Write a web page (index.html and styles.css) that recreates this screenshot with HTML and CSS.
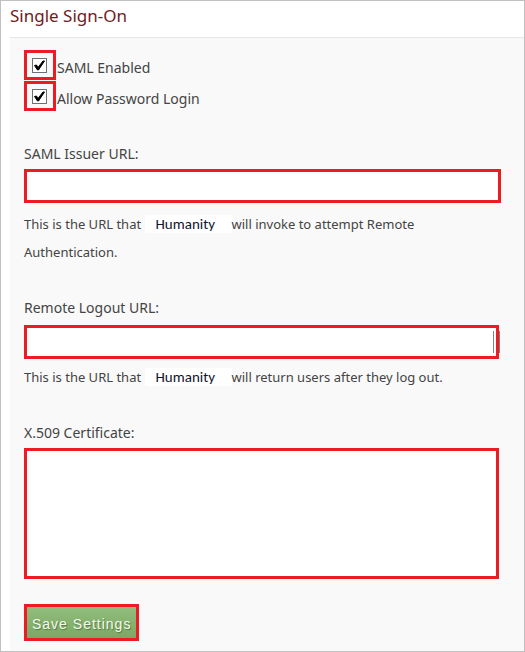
FILE: index.html
```html
<!DOCTYPE html>
<html lang="en">
<head>
<meta charset="utf-8">
<meta name="viewport" content="width=device-width, initial-scale=1">
<title>Single Sign-On</title>
<link rel="stylesheet" href="styles.css">
</head>
<body>
<main class="page">
  <h1 class="title">Single Sign-On</h1>
  <form class="panel">
    <div class="options">
      <div class="option">
        <span class="check">
          <input type="checkbox" id="saml" checked>
          <svg class="tick" viewBox="0 0 15 15" aria-hidden="true"><path d="M2.5 7.5 4.5 7 6 9.5 11 3 12.5 3 6.5 12 5.5 12Z"/></svg>
        </span>
        <label for="saml">SAML Enabled</label>
      </div>
      <div class="option">
        <span class="check">
          <input type="checkbox" id="password" checked>
          <svg class="tick" viewBox="0 0 15 15" aria-hidden="true"><path d="M2.5 7.5 4.5 7 6 9.5 11 3 12.5 3 6.5 12 5.5 12Z"/></svg>
        </span>
        <label for="password">Allow Password Login</label>
      </div>
    </div>
    <div class="field">
      <label for="issuer">SAML Issuer URL:</label>
      <div class="control"><input class="box" type="text" id="issuer"></div>
      <p class="help">This is the URL that <span class="brand">Humanity</span>will invoke to attempt Remote<br>Authentication.</p>
    </div>
    <div class="field field-logout">
      <label for="logout">Remote Logout URL:</label>
      <div class="control control-cursor"><input class="box" type="text" id="logout"></div>
      <p class="help">This is the URL that <span class="brand">Humanity</span>will return users after they log out.</p>
    </div>
    <div class="field field-cert">
      <label for="cert">X.509 Certificate:</label>
      <textarea class="box" id="cert"></textarea>
    </div>
    <button class="save" type="button">Save Settings</button>
  </form>
</main>
</body>
</html>
```
FILE: styles.css
```css
* { box-sizing: border-box; }

body {
  margin: 0;
  background: #fff;
  color: #444;
  font: 14px/28px Tahoma, "Noto Sans", sans-serif;
}

.page {
  display: flex;
  flex-direction: column;
  min-height: 100vh;
  padding-left: 9px;
  border: 1px solid #c0c0c0;
}

.title {
  margin: 0;
  padding-bottom: 7px;
  color: #701b1e;
  font-size: 17px;
  font-weight: 400;
  line-height: 29px;
}

.panel {
  flex: 1;
  padding: 12px 23px 10px 14px;
  border-top: 1px solid #e6e6e6;
  background: #f9f9f9;
}

.options {
  display: grid;
  gap: 1px;
  margin-bottom: 29px;
}

.option {
  display: flex;
  align-items: center;
  gap: 1px;
}

.option label {
  padding-top: 6px;
  line-height: 24px;
}

.check {
  display: grid;
  place-items: center;
  width: 32px;
  height: 30px;
  padding: 1px 2px 0 0;
  border: 3px solid #ed1c24;
}

.check input {
  grid-area: 1 / 1;
  appearance: none;
  width: 15px;
  height: 15px;
  margin: 0;
  border: 1px solid #707070;
  background: #fff;
}

.tick {
  grid-area: 1 / 1;
  width: 15px;
  height: 15px;
  fill: #000;
  stroke: #000;
  visibility: hidden;
  pointer-events: none;
}

.check input:checked + .tick { visibility: visible; }

.field {
  display: flex;
  flex-direction: column;
  margin-bottom: 28px;
}

.field label { margin-bottom: 1px; }

.field-logout label { margin-bottom: 3px; }

.control {
  position: relative;
  display: flex;
  margin-bottom: 7px;
}

.field-logout .control { margin-bottom: 4px; }

.field-logout .control,
.field-cert .box { margin-right: 2px; }

.box {
  flex: 1;
  min-width: 0;
  height: 34px;
  padding: 4px;
  border: 3px solid #ed1c24;
  border-radius: 0;
  background: #fff;
  font: inherit;
}

.box:focus { outline: none; }

.control-cursor::after {
  content: "";
  position: absolute;
  top: 6px;
  right: -1px;
  width: 5px;
  height: 22px;
  border: solid #808080;
  border-width: 0 1px;
}

textarea.box {
  flex: none;
  height: 131px;
  resize: none;
}

.help {
  margin: 0;
  font-size: 13px;
}

.brand {
  display: inline-block;
  width: 87px;
  padding-left: 11px;
  background: #fff;
  color: #10142c;
  font: 15px/18px Calibri, Carlito, "Noto Sans", sans-serif;
}

.field-cert { margin-bottom: 25px; }

.save {
  display: block;
  height: 37px;
  padding: 2px 5px 0;
  border: 3px solid #ed1c24;
  background: linear-gradient(#93bd7c, #79a965);
  color: #f4faef;
  font: 14px/28px "Liberation Sans", Arial, sans-serif;
  letter-spacing: 1px;
  text-shadow: 1px 1px 1px #55773f;
}
```
